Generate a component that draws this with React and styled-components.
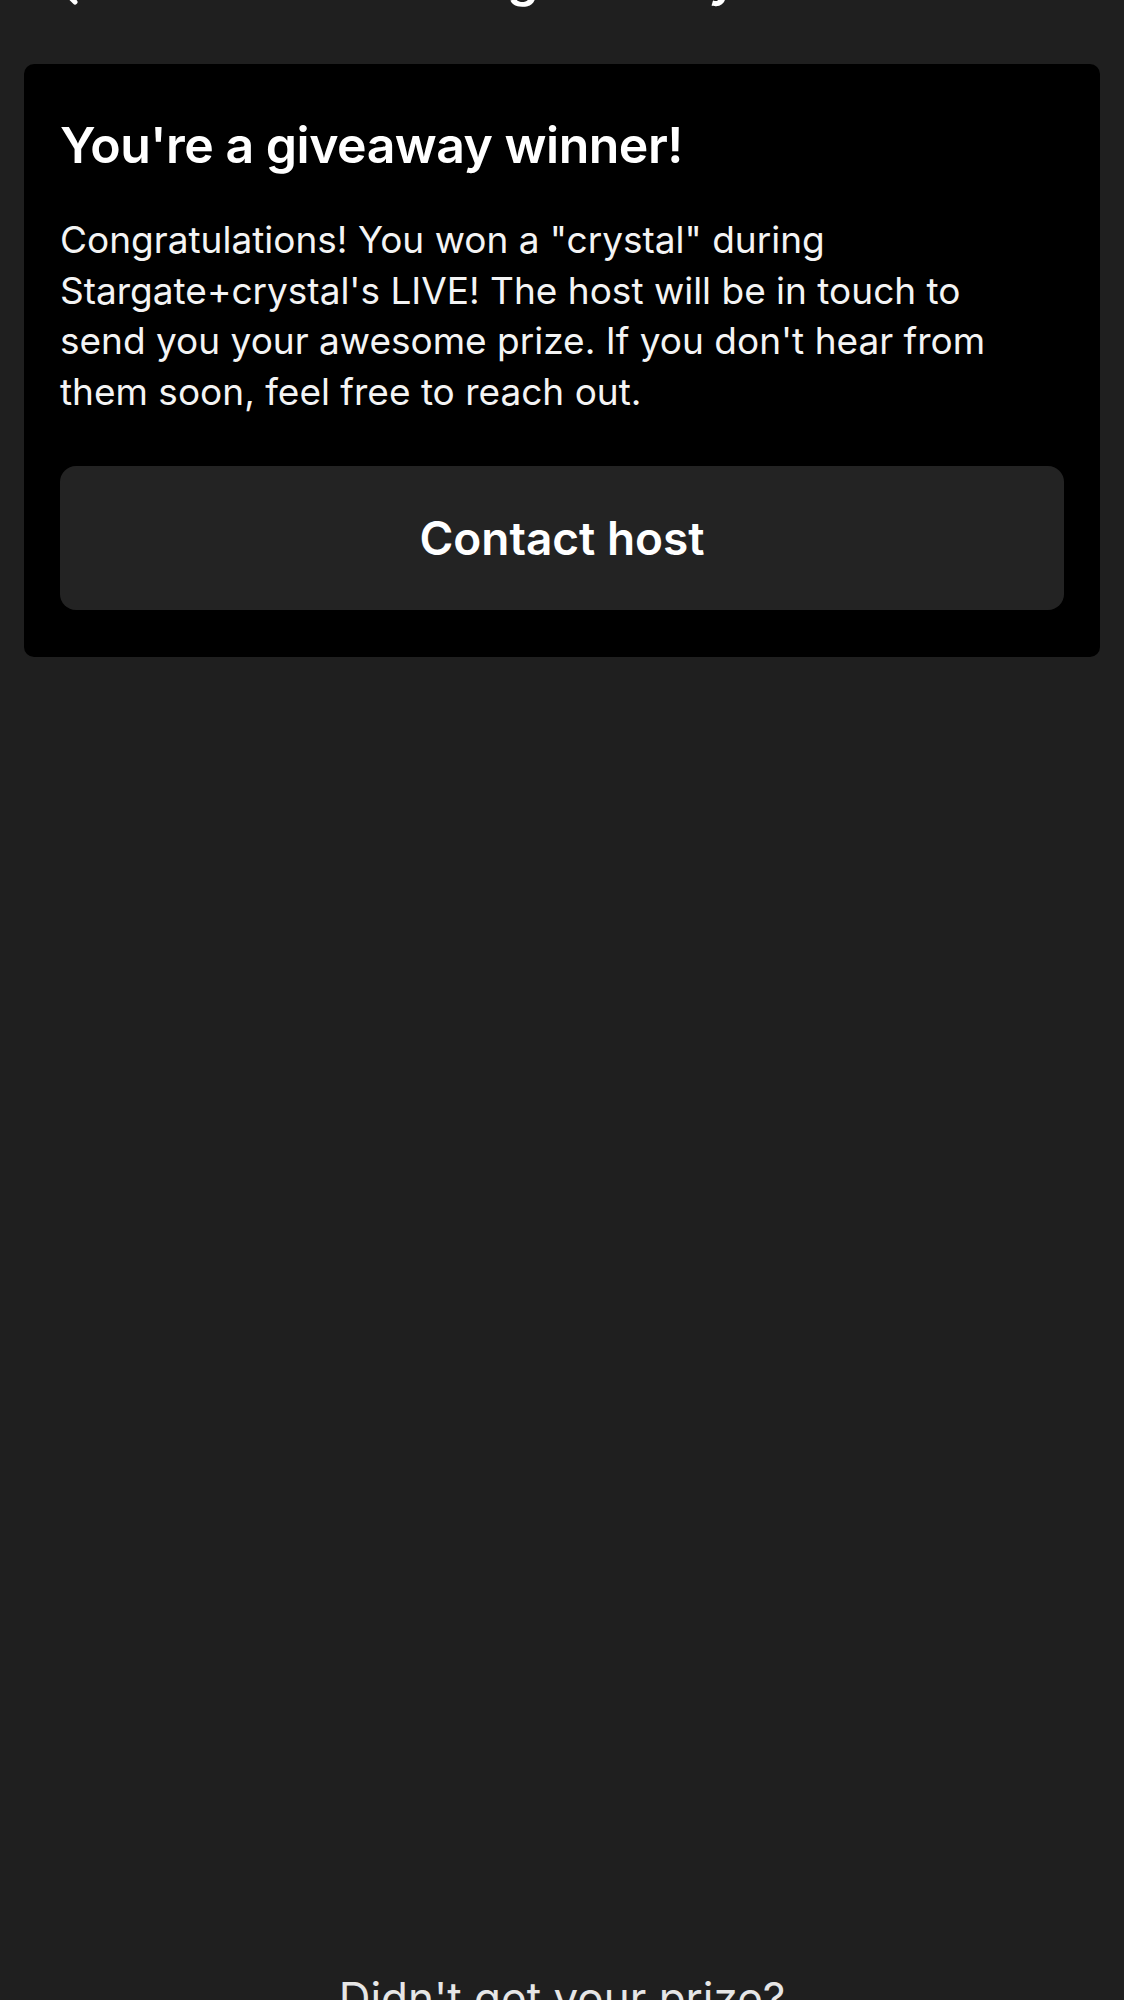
import React from "react";
import styled, { createGlobalStyle } from "styled-components";

const Global = createGlobalStyle`
  html, body {
    margin: 0;
    padding: 0;
    height: 2000px;
    overflow: hidden;
    background: #1f1f1f;
  }
  * { box-sizing: border-box; }
`;

const Screen = styled.div`
  height: 2090px;
  display: flex;
  flex-direction: column;
  background: #1f1f1f;
  color: #fff;
  font-family: Inter, "Noto Sans", sans-serif;
`;

const Header = styled.header`
  height: 100px;
  margin-top: -72px;
  padding: 0 40px;
  display: grid;
  grid-template-columns: 56px 1fr 56px;
  align-items: center;
`;

const BackIcon = styled.svg`
  width: 56px;
  height: 56px;
  display: block;
`;

const HeaderTitle = styled.h1`
  margin: 0;
  text-align: center;
  font-size: 50px;
  line-height: 60px;
  font-weight: 600;
`;

const Card = styled.section`
  margin: 36px 24px 0;
  background: #000;
  border-radius: 10px;
  padding: 51px 36px 47px;
  display: flex;
  flex-direction: column;
`;

const CardTitle = styled.h2`
  margin: 0;
  font-size: 50px;
  line-height: 60px;
  font-weight: 600;
  letter-spacing: -0.5px;
`;

const CardText = styled.p`
  margin: 40px 0 0;
  max-width: 962px;
  font-size: 37px;
  line-height: 50.5px;
  font-weight: 400;
  color: #f4f4f4;
`;

const PrimaryButton = styled.button`
  margin-top: 49px;
  height: 144px;
  border: none;
  border-radius: 16px;
  background: #232323;
  color: #fff;
  font-family: inherit;
  font-size: 46px;
  font-weight: 600;
  cursor: pointer;
`;

const Footer = styled.footer`
  margin-top: auto;
  padding-bottom: 66px;
  text-align: center;
  font-size: 44px;
  line-height: 52px;
  color: #e6e6e6;
`;

export default function App() {
  return (
    <>
      <Global />
      <Screen>
        <Header>
          <BackIcon viewBox="0 0 56 56" fill="none">
            <polyline
              points="35,12 15,32 35,52"
              stroke="#fff"
              strokeWidth="5"
              strokeLinecap="round"
              strokeLinejoin="round"
            />
          </BackIcon>
          <HeaderTitle>LIVE giveaway</HeaderTitle>
          <span />
        </Header>
        <Card>
          <CardTitle>You're a giveaway winner!</CardTitle>
          <CardText>
            Congratulations! You won a "crystal" during Stargate+crystal's LIVE!
            The host will be in touch to send you your awesome prize. If you
            don't hear from them soon, feel free to reach out.
          </CardText>
          <PrimaryButton>Contact host</PrimaryButton>
        </Card>
        <Footer>Didn't get your prize?</Footer>
      </Screen>
    </>
  );
}
